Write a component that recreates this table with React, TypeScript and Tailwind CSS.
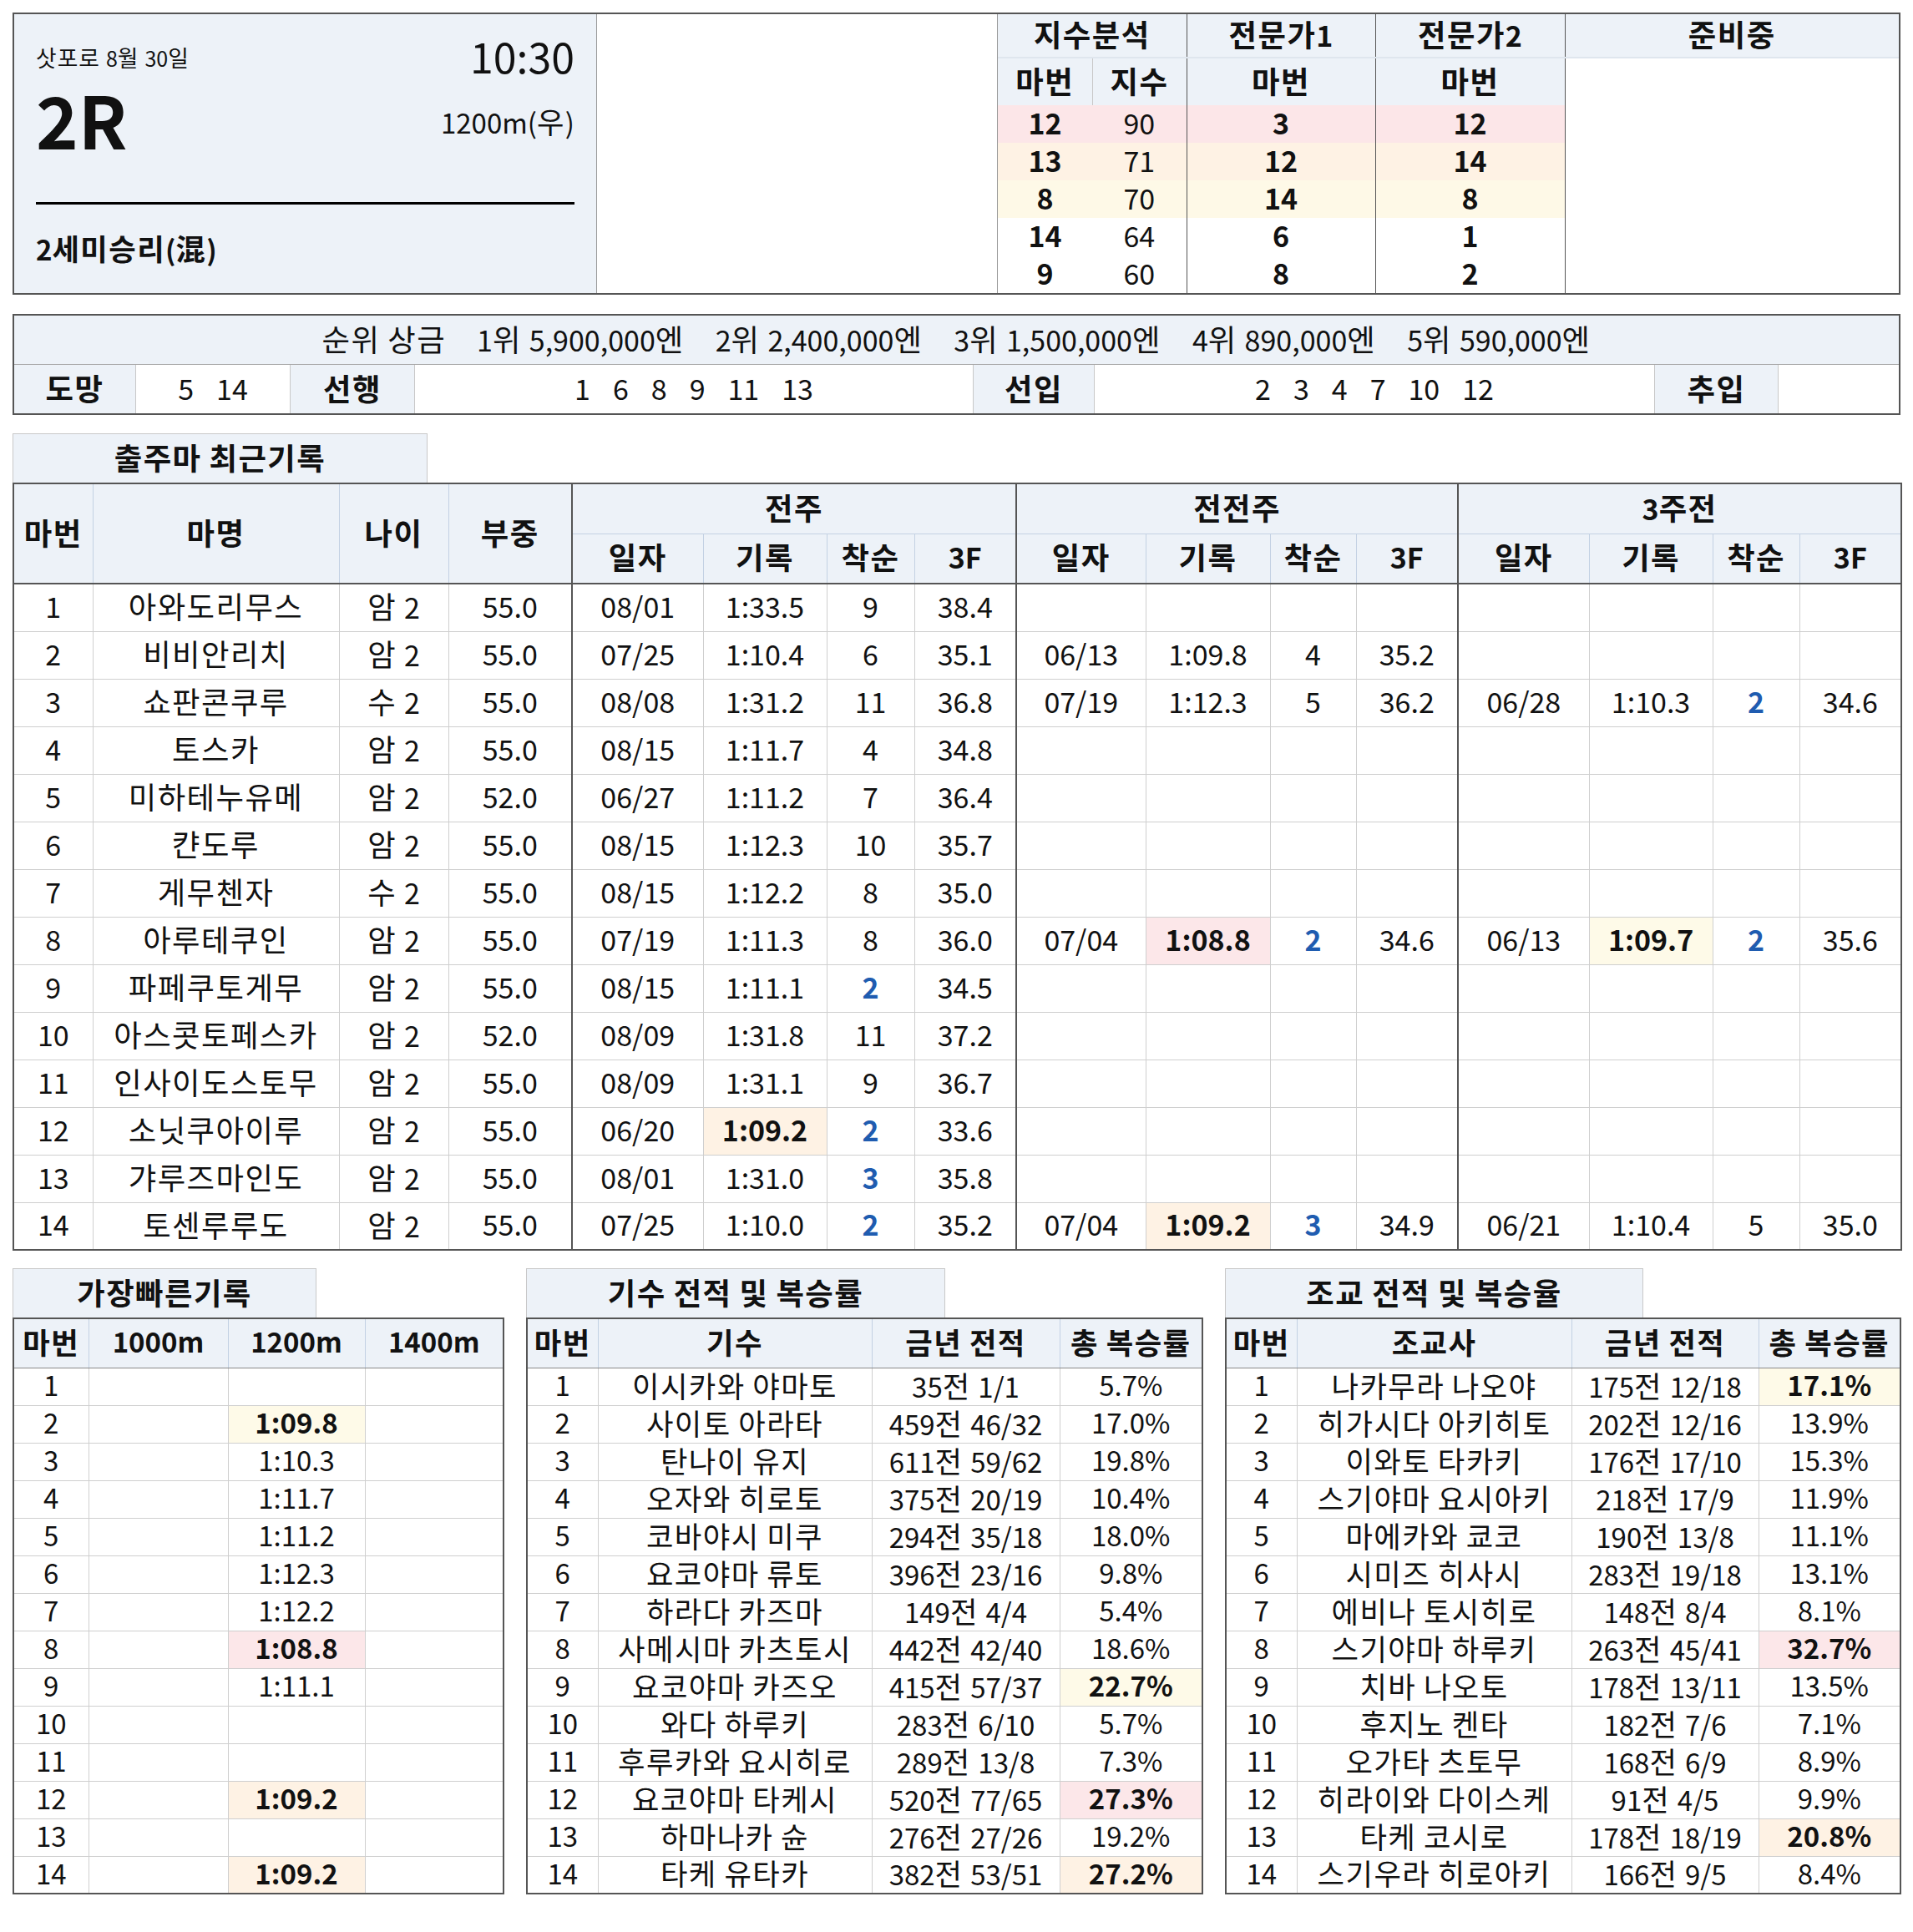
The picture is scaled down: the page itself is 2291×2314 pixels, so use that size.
import React from "react";

type Cell = string;

// Hangul and Hanja runs get a slightly wider, larger face so they take the
// room Malgun Gothic takes in the original sheet.
function K(s: string) {
  const parts = s.split(/([\uac00-\ud7a3\u4e00-\u9fff]+)/);
  return parts.map((p, i) =>
    /[\uac00-\ud7a3\u4e00-\u9fff]/.test(p) ? (
      <span key={i} className="text-[1.07em] tracking-[0.04em]">
        {p}
      </span>
    ) : (
      p
    )
  );
}

// "P:" pink bold, "O:" orange bold, "Y:" yellow bold, "B:" blue bold
function cellClass(v: Cell) {
  const tag = v.slice(0, 2);
  if (tag === "P:") return "bg-[#fce7e9] font-bold";
  if (tag === "O:") return "bg-[#fef2e4] font-bold";
  if (tag === "Y:") return "bg-[#fefae8] font-bold";
  if (tag === "B:") return "text-[#1f5cb0] font-bold";
  return "";
}
function cellText(v: Cell) {
  return K(/^[POYB]:/.test(v) ? v.slice(2) : v);
}

const horses: Cell[][] = [
  ["1", "아와도리무스", "암 2", "55.0", "08/01", "1:33.5", "9", "38.4", "", "", "", "", "", "", "", ""],
  ["2", "비비안리치", "암 2", "55.0", "07/25", "1:10.4", "6", "35.1", "06/13", "1:09.8", "4", "35.2", "", "", "", ""],
  ["3", "쇼판콘쿠루", "수 2", "55.0", "08/08", "1:31.2", "11", "36.8", "07/19", "1:12.3", "5", "36.2", "06/28", "1:10.3", "B:2", "34.6"],
  ["4", "토스카", "암 2", "55.0", "08/15", "1:11.7", "4", "34.8", "", "", "", "", "", "", "", ""],
  ["5", "미하테누유메", "암 2", "52.0", "06/27", "1:11.2", "7", "36.4", "", "", "", "", "", "", "", ""],
  ["6", "캰도루", "암 2", "55.0", "08/15", "1:12.3", "10", "35.7", "", "", "", "", "", "", "", ""],
  ["7", "게무첸자", "수 2", "55.0", "08/15", "1:12.2", "8", "35.0", "", "", "", "", "", "", "", ""],
  ["8", "아루테쿠인", "암 2", "55.0", "07/19", "1:11.3", "8", "36.0", "07/04", "P:1:08.8", "B:2", "34.6", "06/13", "Y:1:09.7", "B:2", "35.6"],
  ["9", "파페쿠토게무", "암 2", "55.0", "08/15", "1:11.1", "B:2", "34.5", "", "", "", "", "", "", "", ""],
  ["10", "아스콧토페스카", "암 2", "52.0", "08/09", "1:31.8", "11", "37.2", "", "", "", "", "", "", "", ""],
  ["11", "인사이도스토무", "암 2", "55.0", "08/09", "1:31.1", "9", "36.7", "", "", "", "", "", "", "", ""],
  ["12", "소닛쿠아이루", "암 2", "55.0", "06/20", "O:1:09.2", "B:2", "33.6", "", "", "", "", "", "", "", ""],
  ["13", "갸루즈마인도", "암 2", "55.0", "08/01", "1:31.0", "B:3", "35.8", "", "", "", "", "", "", "", ""],
  ["14", "토센루루도", "암 2", "55.0", "07/25", "1:10.0", "B:2", "35.2", "07/04", "O:1:09.2", "B:3", "34.9", "06/21", "1:10.4", "5", "35.0"],
];

const mainCols = [95, 295, 131, 148, 157, 148, 105, 122, 155, 149, 103, 122, 157, 148, 104, 122];

const fastest: Cell[][] = [
  ["1", "", "", ""],
  ["2", "", "Y:1:09.8", ""],
  ["3", "", "1:10.3", ""],
  ["4", "", "1:11.7", ""],
  ["5", "", "1:11.2", ""],
  ["6", "", "1:12.3", ""],
  ["7", "", "1:12.2", ""],
  ["8", "", "P:1:08.8", ""],
  ["9", "", "1:11.1", ""],
  ["10", "", "", ""],
  ["11", "", "", ""],
  ["12", "", "O:1:09.2", ""],
  ["13", "", "", ""],
  ["14", "", "O:1:09.2", ""],
];

const jockeys: Cell[][] = [
  ["1", "이시카와 야마토", "35전 1/1", "5.7%"],
  ["2", "사이토 아라타", "459전 46/32", "17.0%"],
  ["3", "탄나이 유지", "611전 59/62", "19.8%"],
  ["4", "오자와 히로토", "375전 20/19", "10.4%"],
  ["5", "코바야시 미쿠", "294전 35/18", "18.0%"],
  ["6", "요코야마 류토", "396전 23/16", "9.8%"],
  ["7", "하라다 카즈마", "149전 4/4", "5.4%"],
  ["8", "사메시마 카츠토시", "442전 42/40", "18.6%"],
  ["9", "요코야마 카즈오", "415전 57/37", "Y:22.7%"],
  ["10", "와다 하루키", "283전 6/10", "5.7%"],
  ["11", "후루카와 요시히로", "289전 13/8", "7.3%"],
  ["12", "요코야마 타케시", "520전 77/65", "P:27.3%"],
  ["13", "하마나카 슌", "276전 27/26", "19.2%"],
  ["14", "타케 유타카", "382전 53/51", "O:27.2%"],
];

const trainers: Cell[][] = [
  ["1", "나카무라 나오야", "175전 12/18", "Y:17.1%"],
  ["2", "히가시다 아키히토", "202전 12/16", "13.9%"],
  ["3", "이와토 타카키", "176전 17/10", "15.3%"],
  ["4", "스기야마 요시아키", "218전 17/9", "11.9%"],
  ["5", "마에카와 쿄코", "190전 13/8", "11.1%"],
  ["6", "시미즈 히사시", "283전 19/18", "13.1%"],
  ["7", "에비나 토시히로", "148전 8/4", "8.1%"],
  ["8", "스기야마 하루키", "263전 45/41", "P:32.7%"],
  ["9", "치바 나오토", "178전 13/11", "13.5%"],
  ["10", "후지노 켄타", "182전 7/6", "7.1%"],
  ["11", "오가타 츠토무", "168전 6/9", "8.9%"],
  ["12", "히라이와 다이스케", "91전 4/5", "9.9%"],
  ["13", "타케 코시로", "178전 18/19", "O:20.8%"],
  ["14", "스기우라 히로아키", "166전 9/5", "8.4%"],
];

const picks = [
  { a: "12", b: "90", c: "3", d: "12", bg: "bg-[#fce6e8]" },
  { a: "13", b: "71", c: "12", d: "14", bg: "bg-[#fef2e4]" },
  { a: "8", b: "70", c: "14", d: "8", bg: "bg-[#fef9e7]" },
  { a: "14", b: "64", c: "6", d: "1", bg: "" },
  { a: "9", b: "60", c: "8", d: "2", bg: "" },
];

const prizes = ["순위 상금", "1위 5,900,000엔", "2위 2,400,000엔", "3위 1,500,000엔", "4위 890,000엔", "5위 590,000엔"];

function Tab({ title, w }: { title: string; w: string }) {
  return (
    <div className={`${w} h-[59px] pb-[4px] bg-[#edf2f8] border border-b-0 border-[#c8c8c8] flex items-center justify-center text-[34px] font-bold`}>
      <span>{K(title)}</span>
    </div>
  );
}

function Nums({ list }: { list: string[] }) {
  return (
    <div className="flex items-center justify-center gap-[27px] pb-[4px]">
      {list.map((n) => (
        <span key={n}>{n}</span>
      ))}
    </div>
  );
}

function SmallTable({ heads, cols, rows, w }: { heads: string[]; cols: number[]; rows: Cell[][]; w: string }) {
  return (
    <table className={`${w} table-fixed border-collapse border-2 border-[#555]`}>
      <colgroup>
        {cols.map((c, i) => (
          <col key={i} style={{ width: c }} />
        ))}
      </colgroup>
      <thead>
        <tr className="h-[59px] bg-[#edf2f8]">
          {heads.map((h) => (
            <th key={h} className="border border-[#c3d1e3] border-b-[#8a8a8a] text-[33px] font-bold leading-none pb-[4px] whitespace-nowrap">
              {K(h)}
            </th>
          ))}
        </tr>
      </thead>
      <tbody>
        {rows.map((r, i) => (
          <tr key={i} className="h-[45px]">
            {r.map((v, j) => (
              <td key={j} className={`border border-[#cfcfcf] text-center text-[33px] leading-none pb-[4px] whitespace-nowrap ${cellClass(v)}`}>
                {cellText(v)}
              </td>
            ))}
          </tr>
        ))}
      </tbody>
    </table>
  );
}

export default function App() {
  return (
    <div className="w-[2291px] min-h-[2314px] bg-white px-[15px] pt-[15px] text-[#111] [word-spacing:0.08em] font-['Noto_Sans_CJK_KR','Noto_Sans',sans-serif]">
      {/* Race header */}
      <div className="flex h-[338px] border-2 border-[#555]">
        <div className="w-[698px] bg-[#edf2f8] border-r border-[#9a9a9a] px-[26px] pt-[18px] flex flex-col">
          <div className="flex justify-between items-end h-[56px]">
            <span className="text-[25px] leading-none pb-[8px]">{K("삿포로 8월 30일")}</span>
            <span className="text-[50px] leading-none">10:30</span>
          </div>
          <div className="flex justify-between items-center h-[90px] mt-[6px]">
            <span className="text-[86px] font-bold leading-none">2R</span>
            <span className="text-[33px] leading-none pt-[6px]">{K("1200m(우)")}</span>
          </div>
          <div className="h-[3px] bg-black mt-[55px]" />
          <div className="text-[33px] font-bold leading-none mt-[34px]">{K("2세미승리(混)")}</div>
        </div>
        <div className="w-[480px] border-r border-[#9a9a9a]" />
        <table className="flex-1 table-fixed border-collapse">
          <colgroup>
            <col className="w-[113px]" />
            <col className="w-[113px]" />
            <col className="w-[226px]" />
            <col className="w-[227px]" />
            <col />
          </colgroup>
          <thead>
            <tr className="h-[52px] bg-[#edf2f8]">
              <th colSpan={2} className="border-r border-[#555] border-b-2 border-b-[#dfe6ee] text-[34px] font-bold leading-none pb-[4px]">{K("지수분석")}</th>
              <th className="border-r border-[#555] border-b-2 border-b-[#dfe6ee] text-[34px] font-bold leading-none pb-[4px]">{K("전문가1")}</th>
              <th className="border-r border-[#555] border-b-2 border-b-[#dfe6ee] text-[34px] font-bold leading-none pb-[4px]">{K("전문가2")}</th>
              <th className="border-b-2 border-b-[#dfe6ee] text-[34px] font-bold leading-none pb-[4px]">{K("준비중")}</th>
            </tr>
            <tr className="h-[57px] bg-[#edf2f8]">
              <th className="border-r border-[#c8c8c8] text-[34px] font-bold leading-none pb-[4px]">{K("마번")}</th>
              <th className="border-r border-[#555] text-[34px] font-bold leading-none pb-[4px]">{K("지수")}</th>
              <th className="border-r border-[#555] text-[34px] font-bold leading-none pb-[4px]">{K("마번")}</th>
              <th className="border-r border-[#555] text-[34px] font-bold leading-none pb-[4px]">{K("마번")}</th>
              <th rowSpan={6} className="bg-white" />
            </tr>
          </thead>
          <tbody>
            {picks.map((p, i) => (
              <tr key={i} className={`h-[45px] ${p.bg}`}>
                <td className="text-center text-[34px] font-bold leading-none pb-[3px]">{p.a}</td>
                <td className="text-center text-[34px] leading-none pb-[3px] border-r border-[#555]">{p.b}</td>
                <td className="text-center text-[34px] font-bold leading-none pb-[3px] border-r border-[#555]">{p.c}</td>
                <td className="text-center text-[34px] font-bold leading-none pb-[3px] border-r border-[#555]">{p.d}</td>
              </tr>
            ))}
          </tbody>
        </table>
      </div>

      {/* Prize and running style */}
      <div className="mt-[23px] border-2 border-[#555]">
        <div className="h-[59px] pb-[4px] bg-[#edf2f8] border-b border-[#a8a8a8] flex items-center justify-center gap-[37px] text-[34px] whitespace-nowrap">
          {prizes.map((p) => (
            <span key={p}>{K(p)}</span>
          ))}
        </div>
        <div className="flex h-[58px] text-[34px]">
          <div className="w-[146px] pb-[4px] bg-[#edf2f8] border-r border-[#c8c8c8] flex items-center justify-center font-bold">
            <span>{K("도망")}</span>
          </div>
          <div className="w-[185px] border-r border-[#c8c8c8] flex items-center justify-center">
            <Nums list={["5", "14"]} />
          </div>
          <div className="w-[149px] pb-[4px] bg-[#edf2f8] border-r border-[#c8c8c8] flex items-center justify-center font-bold">
            <span>{K("선행")}</span>
          </div>
          <div className="w-[669px] border-r border-[#c8c8c8] flex items-center justify-center">
            <Nums list={["1", "6", "8", "9", "11", "13"]} />
          </div>
          <div className="w-[145px] pb-[4px] bg-[#edf2f8] border-r border-[#c8c8c8] flex items-center justify-center font-bold">
            <span>{K("선입")}</span>
          </div>
          <div className="w-[671px] border-r border-[#c8c8c8] flex items-center justify-center">
            <Nums list={["2", "3", "4", "7", "10", "12"]} />
          </div>
          <div className="w-[148px] pb-[4px] bg-[#edf2f8] border-r border-[#c8c8c8] flex items-center justify-center font-bold">
            <span>{K("추입")}</span>
          </div>
          <div className="flex-1" />
        </div>
      </div>

      {/* Recent records */}
      <div className="mt-[22px]">
        <Tab title="출주마 최근기록" w="w-[497px]" />
        <table className="w-full table-fixed border-collapse border-2 border-[#555]">
          <colgroup>
            {mainCols.map((c, i) => (
              <col key={i} style={{ width: c }} />
            ))}
          </colgroup>
          <thead className="bg-[#edf2f8] text-[34px] font-bold">
            <tr className="h-[60px]">
              <th rowSpan={2} className="border border-[#c3d1e3] border-b-2 border-b-[#555] border-l-[#555] leading-none pb-[4px]">{K("마번")}</th>
              <th rowSpan={2} className="border border-[#c3d1e3] border-b-2 border-b-[#555] leading-none pb-[4px]">{K("마명")}</th>
              <th rowSpan={2} className="border border-[#c3d1e3] border-b-2 border-b-[#555] leading-none pb-[4px]">{K("나이")}</th>
              <th rowSpan={2} className="border border-[#c3d1e3] border-b-2 border-b-[#555] border-r-2 border-r-[#555] leading-none pb-[4px]">{K("부중")}</th>
              <th colSpan={4} className="border border-[#c3d1e3] border-r-2 border-r-[#555] leading-none pb-[4px]">{K("전주")}</th>
              <th colSpan={4} className="border border-[#c3d1e3] border-r-2 border-r-[#555] leading-none pb-[4px]">{K("전전주")}</th>
              <th colSpan={4} className="border border-[#c3d1e3] leading-none pb-[4px]">{K("3주전")}</th>
            </tr>
            <tr className="h-[60px]">
              {["일자", "기록", "착순", "3F", "일자", "기록", "착순", "3F", "일자", "기록", "착순", "3F"].map((h, i) => (
                <th
                  key={i}
                  className={`border border-[#c3d1e3] border-b-2 border-b-[#555] leading-none pb-[4px] ${i === 3 || i === 7 ? "border-r-2 border-r-[#555]" : ""}`}
                >
                  {K(h)}
                </th>
              ))}
            </tr>
          </thead>
          <tbody>
            {horses.map((r, i) => (
              <tr key={i} className="h-[57px]">
                {r.map((v, j) => (
                  <td
                    key={j}
                    className={`border border-[#cfcfcf] text-center text-[34px] leading-none pb-[4px] whitespace-nowrap ${j === 3 || j === 7 || j === 11 ? "border-r-2 border-r-[#555]" : ""} ${cellClass(v)}`}
                  >
                    {cellText(v)}
                  </td>
                ))}
              </tr>
            ))}
          </tbody>
        </table>
      </div>

      {/* Bottom tables */}
      <div className="flex gap-[28px] mt-[21px] items-start">
        <div className="w-[587px]">
          <Tab title="가장빠른기록" w="w-[364px]" />
          <SmallTable w="w-[587px]" heads={["마번", "1000m", "1200m", "1400m"]} cols={[90, 167, 164, 166]} rows={fastest} />
        </div>
        <div className="w-[809px]">
          <Tab title="기수 전적 및 복승률" w="w-[502px]" />
          <SmallTable w="w-[809px]" heads={["마번", "기수", "금년 전적", "총 복승률"]} cols={[85, 328, 225, 171]} rows={jockeys} />
        </div>
        <div className="w-[808px]">
          <Tab title="조교 전적 및 복승율" w="w-[501px]" />
          <SmallTable w="w-[808px]" heads={["마번", "조교사", "금년 전적", "총 복승률"]} cols={[85, 329, 224, 170]} rows={trainers} />
        </div>
      </div>
    </div>
  );
}
